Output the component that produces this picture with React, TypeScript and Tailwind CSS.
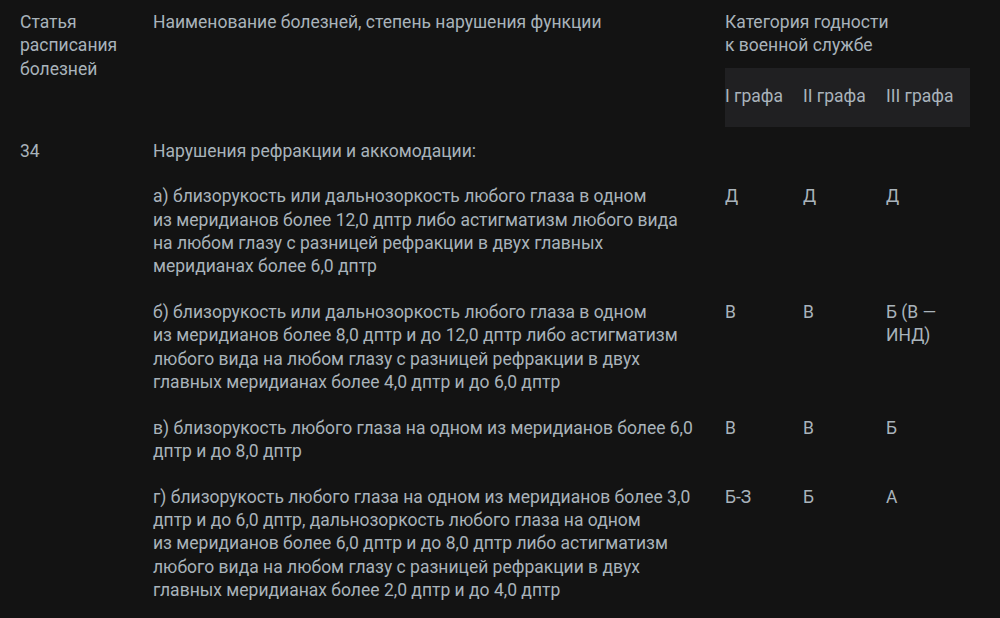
import React from "react";

type Row = { num?: string; lines: string[]; c: [string[], string[], string[]] | null };

const rows: Row[] = [
  { num: "34", lines: ["Нарушения рефракции и аккомодации:"], c: null },
  {
    lines: [
      "а) близорукость или дальнозоркость любого глаза в одном",
      "из меридианов более 12,0 дптр либо астигматизм любого вида",
      "на любом глазу с разницей рефракции в двух главных",
      "меридианах более 6,0 дптр",
    ],
    c: [["Д"], ["Д"], ["Д"]],
  },
  {
    lines: [
      "б) близорукость или дальнозоркость любого глаза в одном",
      "из меридианов более 8,0 дптр и до 12,0 дптр либо астигматизм",
      "любого вида на любом глазу с разницей рефракции в двух",
      "главных меридианах более 4,0 дптр и до 6,0 дптр",
    ],
    c: [["В"], ["В"], ["Б (В —", "ИНД)"]],
  },
  {
    lines: ["в) близорукость любого глаза на одном из меридианов более 6,0", "дптр и до 8,0 дптр"],
    c: [["В"], ["В"], ["Б"]],
  },
  {
    lines: [
      "г) близорукость любого глаза на одном из меридианов более 3,0",
      "дптр и до 6,0 дптр, дальнозоркость любого глаза на одном",
      "из меридианов более 6,0 дптр и до 8,0 дптр либо астигматизм",
      "любого вида на любом глазу с разницей рефракции в двух",
      "главных меридианах более 2,0 дптр и до 4,0 дптр",
    ],
    c: [["Б-З"], ["Б"], ["А"]],
  },
];

function Lines({ lines }: { lines: string[] }) {
  return (
    <>
      {lines.map((l, i) => (
        <div key={i} className="whitespace-nowrap">
          {l}
        </div>
      ))}
    </>
  );
}

export default function App() {
  return (
    <div
      className="w-[1000px] h-[618px] overflow-hidden bg-[#131313] text-[#a9b3bb] text-[17.5px] leading-[23.3px] pl-[20px] pt-[11px]"
      style={{ fontFamily: "Roboto, 'Noto Sans', sans-serif" }}
    >
      {/* header */}
      <div className="grid grid-cols-[133px_572px_245px]">
        <div>
          <div>Статья</div>
          <div>расписания</div>
          <div>болезней</div>
        </div>
        <div>Наименование болезней, степень нарушения функции</div>
        <div>
          <div>Категория годности</div>
          <div>к военной службе</div>
          <div className="mt-[10px] h-[59px] bg-[#202022] grid grid-cols-[78px_83px_84px] items-center">
            <div>I графа</div>
            <div>II графа</div>
            <div>III графа</div>
          </div>
        </div>
      </div>
      {/* body */}
      <div className="mt-[13px] flex flex-col gap-[22.5px]">
        {rows.map((r, i) => (
          <div key={i} className="grid grid-cols-[133px_572px_78px_83px_84px]">
            <div>{r.num ?? ""}</div>
            <div>
              <Lines lines={r.lines} />
            </div>
            {r.c ? (
              r.c.map((v, j) => (
                <div key={j}>
                  <Lines lines={v} />
                </div>
              ))
            ) : (
              <>
                <div />
                <div />
                <div />
              </>
            )}
          </div>
        ))}
      </div>
    </div>
  );
}
